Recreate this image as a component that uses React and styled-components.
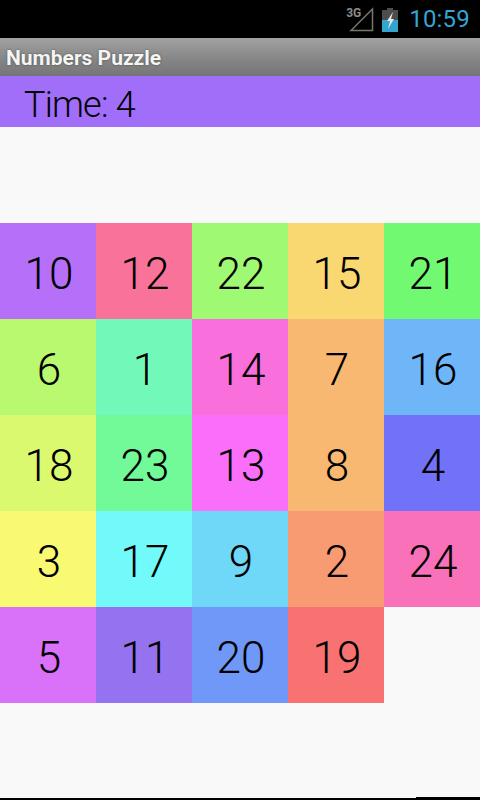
import React from "react";
import styled, { createGlobalStyle } from "styled-components";

const GlobalStyle = createGlobalStyle`
  html, body {
    margin: 0;
    padding: 0;
    background: #f9f9f9;
  }
`;

const Screen = styled.div`
  width: 480px;
  height: 800px;
  display: flex;
  flex-direction: column;
  overflow: hidden;
  background: #f9f9f9;
`;

const StatusBar = styled.div`
  height: 38px;
  flex: none;
  background: #000;
  display: flex;
  align-items: center;
  justify-content: flex-end;
  padding-right: 10px;
  box-sizing: border-box;
  font-family: "Roboto", sans-serif;
`;

const Clock = styled.span`
  font-size: 24px;
  color: #33a5d5;
  margin-left: 11px;
  line-height: 38px;
  letter-spacing: 0.2px;
`;

const Signal = styled.div`
  position: relative;
  width: 28px;
  height: 26px;
`;

const SignalLabel = styled.span`
  position: absolute;
  left: 0;
  top: 1px;
  font-size: 12px;
  font-weight: 700;
  line-height: 12px;
  color: #8c8c8c;
`;

const SignalIcon = styled.svg`
  position: absolute;
  left: 0;
  top: 0;
`;

const BatteryIcon = styled.svg`
  margin-left: 8px;
  margin-top: 1px;
`;

const ActionBar = styled.div`
  height: 38px;
  flex: none;
  box-sizing: border-box;
  padding: 1px 0 0 6px;
  display: flex;
  align-items: center;
  background: linear-gradient(#a2a2a2 0, #929292 30%, #828282 65%, #757575 100%);
  color: #f5f5f5;
  font-family: "Roboto", sans-serif;
  font-weight: 700;
  font-size: 21px;
  text-shadow: 0 0 2px rgba(40, 40, 40, 0.7);
`;

const TimerBar = styled.div`
  height: 51px;
  flex: none;
  box-sizing: border-box;
  padding: 2px 0 0 24px;
  background: #a06ef9;
  color: #000;
  font-family: "Roboto", sans-serif;
  font-weight: 300;
  font-size: 36px;
  line-height: 54px;
  letter-spacing: -0.8px;
`;

const Board = styled.div`
  display: grid;
  grid-template-columns: repeat(5, 96px);
  grid-auto-rows: 96px;
  margin-top: 96px;
`;

const Tile = styled.div`
  display: flex;
  align-items: center;
  justify-content: center;
  padding: 6px 0 0 2px;
  box-sizing: border-box;
  background: ${(p) => p.$color};
  color: #000;
  font-family: "Roboto", sans-serif;
  font-weight: 300;
  font-size: 44px;
`;

const BottomEdge = styled.div`
  margin-top: auto;
  height: 3px;
  position: relative;
`;

const EdgeLine = styled.div`
  position: absolute;
  left: 0;
  right: 0;
  bottom: 0;
  height: 2px;
  background: #000;
`;

const EdgeStep = styled.div`
  position: absolute;
  right: 0;
  bottom: 2px;
  width: 64px;
  height: 1px;
  background: #000;
`;

const tiles = [
  [10, "#b66ff9"], [12, "#f97299"], [22, "#9ff972"], [15, "#f9d872"], [21, "#72f972"],
  [6, "#b9f96f"], [1, "#72f9b9"], [14, "#f96fdb"], [7, "#f9b872"], [16, "#6fb6f9"],
  [18, "#dbf96f"], [23, "#72f998"], [13, "#f96ff9"], [8, "#f9b872"], [4, "#7272f9"],
  [3, "#f9f972"], [17, "#72f9f9"], [9, "#6fd8f9"], [2, "#f99b72"], [24, "#f972b9"],
  [5, "#d972f9"], [11, "#9472f0"], [20, "#6f98f9"], [19, "#f97272"],
];

const App = () => {
  return (
    <Screen>
      <GlobalStyle />
      <StatusBar>
        <Signal>
          <SignalLabel>3G</SignalLabel>
          <SignalIcon width="28" height="26" viewBox="0 0 28 26">
            <path d="M26.5 3 L5 24.5 H26.5 Z" fill="none" stroke="#77776c" strokeWidth="1.5" />
          </SignalIcon>
        </Signal>
        <BatteryIcon width="16" height="24" viewBox="0 0 16 24">
          <rect x="5" y="0" width="6" height="3" fill="#4d4d4d" />
          <rect x="0" y="2" width="16" height="10" fill="#4d4d4d" />
          <rect x="0" y="12" width="16" height="12" fill="#33a5cf" />
          <path d="M11 4 L5 13 H8 L6 21 L12 11 H9 Z" fill="#e8e8e8" />
        </BatteryIcon>
        <Clock>10:59</Clock>
      </StatusBar>
      <ActionBar>Numbers Puzzle</ActionBar>
      <TimerBar>Time: 4</TimerBar>
      <Board>
        {tiles.map(([n, color]) => (
          <Tile key={n} $color={color}>{n}</Tile>
        ))}
      </Board>
      <BottomEdge>
        <EdgeLine />
        <EdgeStep />
      </BottomEdge>
    </Screen>
  );
};

export default App;
